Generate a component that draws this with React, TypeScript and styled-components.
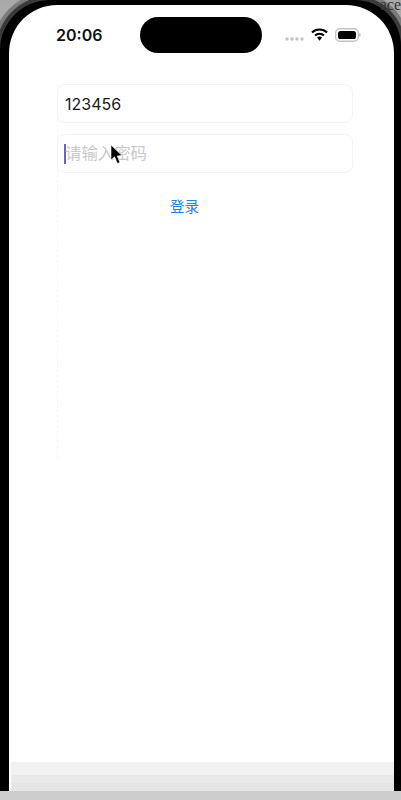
import React from "react";
import styled, { createGlobalStyle } from "styled-components";

const Global = createGlobalStyle`
  html, body { margin: 0; padding: 0; background: #c9c9c9; }
  * { box-sizing: border-box; }
`;

const Page = styled.div`
  position: relative;
  width: 401px;
  height: 800px;
  overflow: hidden;
  background: linear-gradient(180deg, #a9a9a9 0, #b4b4b4 60px, #cdcdcd 100%);
  font-family: Inter, "Liberation Sans", "Noto Sans CJK SC", sans-serif;
`;

const Backdrop = styled.span`
  position: absolute;
  z-index: 1;
  top: 0;
  right: 0;
  font-family: "Liberation Serif", serif;
  font-size: 16px;
  line-height: 10px;
  color: #333;
`;

const Phone = styled.div`
  position: relative;
  width: 401px;
  height: 791px;
  padding: 5px 7px 0 9px;
  background: #000;
  border-radius: 50px 46px 0 0;
  box-shadow: 0 0 0 4px #3a3a3a, 0 0 0 8px #7b7b7b;
  clip-path: inset(-8px -8px 0 -8px);
`;

const Screen = styled.div`
  display: flex;
  flex-direction: column;
  width: 385px;
  height: 786px;
  background: #fff;
  border-radius: 48px 48px 0 0;
  overflow: hidden;
`;

const StatusBar = styled.div`
  display: flex;
  align-items: center;
  height: 35px;
  margin-top: 12px;
  padding-left: 47px;
`;

const Time = styled.div`
  width: 84px;
  font-size: 16px;
  font-weight: 600;
  color: #111;
`;

const Island = styled.div`
  width: 122px;
  height: 36px;
  border-radius: 18px;
  background: #000;
`;

const StatusIcons = styled.div`
  display: flex;
  align-items: center;
  margin-left: 23px;
`;

const Form = styled.div`
  display: flex;
  flex-direction: column;
  width: 296px;
  height: 374px;
  margin: 32px 0 0 48px;
  border-left: 1px dashed #f6f6f6;
`;

const Field = styled.div<{ $gap?: number }>`
  display: flex;
  align-items: center;
  height: 39px;
  margin-top: ${(p) => p.$gap ?? 0}px;
  margin-left: -1px;
  padding-left: 7px;
  border: 1px solid #f3f3f3;
  border-radius: 8px;
  font-size: 16px;
  color: #1a1a1a;
`;

const Caret = styled.span`
  width: 2px;
  height: 20px;
  margin-left: -1px;
  background: #5a68cc;
`;

const Placeholder = styled.span`
  margin: -3px 0 0 -1px;
  font-size: 16.4px;
  color: #c9c9c9;
`;

const LoginRow = styled.div`
  padding: 23px 0 0 112px;
`;

const LoginText = styled.span`
  font-size: 14.5px;
  line-height: 20px;
  color: #1a84e6;
`;

const Footer = styled.div`
  display: flex;
  flex-direction: column;
  margin-top: auto;
  margin-left: 2px;
`;

const FooterBand = styled.div<{ $h: number; $c: string }>`
  height: ${(p) => p.$h}px;
  background: ${(p) => p.$c};
`;

const Pointer = styled.svg`
  position: absolute;
  left: 110px;
  top: 144px;
`;

export default function App() {
  return (
    <Page>
      <Global />
      <Backdrop>ace</Backdrop>
      <Phone>
        <Screen>
          <StatusBar>
            <Time>20:06</Time>
            <Island />
            <StatusIcons>
              <svg width="76" height="14" viewBox="0 0 76 14">
                <g fill="#c2c2c2">
                  <circle cx="2" cy="11" r="1.7" />
                  <circle cx="7" cy="11" r="1.7" />
                  <circle cx="12" cy="11" r="1.7" />
                  <circle cx="17" cy="11" r="1.7" />
                </g>
                <g fill="none" stroke="#000" strokeWidth="2">
                  <path d="M27 4.5 C31 0.5 38 0.5 42 4.5" />
                  <path d="M30 7.5 C32.5 5 36.5 5 39 7.5" />
                </g>
                <path d="M32 9.5 L34.5 12.8 L37 9.5 C35.5 8.3 33.5 8.3 32 9.5 Z" fill="#000" />
                <rect x="50.7" y="0.7" width="22.6" height="12.6" rx="4" fill="#fff" stroke="#c4c4c4" strokeWidth="1.4" />
                <rect x="53" y="3" width="18" height="8" rx="2.6" fill="#000" />
                <rect x="74" y="5.5" width="1.5" height="3" rx="0.7" fill="#b5b5b5" />
              </svg>
            </StatusIcons>
          </StatusBar>
          <Form>
            <Field>123456</Field>
            <Field $gap={11}>
              <Caret />
              <Placeholder>请输入密码</Placeholder>
            </Field>
            <LoginRow>
              <LoginText>登录</LoginText>
            </LoginRow>
          </Form>
          <Footer>
            <FooterBand $h={13} $c="#f1f1f1" />
            <FooterBand $h={8} $c="#e9e9e9" />
            <FooterBand $h={8} $c="#e5e5e5" />
          </Footer>
        </Screen>
      </Phone>
      <Pointer width="14" height="22" viewBox="0 0 14 22">
        <path d="M1 1 L1 16 L4.6 12.8 L7.4 19.5 L10 18.4 L7.2 12 L12 11.6 Z" fill="#000" stroke="#fff" strokeWidth="0.6" />
      </Pointer>
    </Page>
  );
}
